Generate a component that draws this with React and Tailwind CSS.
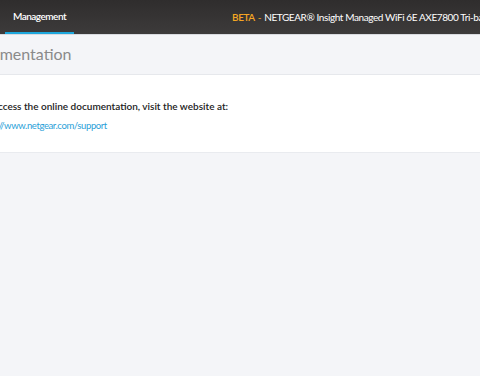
export default function App() {
  return (
    <div className="min-h-[376px] w-[480px] overflow-hidden bg-[#f4f5f8]" style={{ fontFamily: 'Lato, "Noto Sans", sans-serif' }}>
      <header className="flex h-[35px] items-stretch bg-gradient-to-b from-[#2f2d2d] to-[#3d3b3b] border-b border-[#d9dbe0]">
        <nav className="ml-[5px] flex">
          <div className="flex w-[69px] items-center justify-center border-b-[2px] border-[#1ea7dc] pt-[1px] text-[10px] font-semibold tracking-[-0.5px] text-white">
            Management
          </div>
        </nav>
        <div className="ml-auto flex min-w-0 items-center pl-[158px] whitespace-nowrap text-[10px] tracking-[-0.4px] text-white">
          <span className="font-semibold text-[#f5a623]">BETA</span>
          <span className="ml-[3px] text-[#f5a623]">-</span>
          <span className="ml-[3px]">NETGEAR® Insight Managed WiFi 6E AXE7800 Tri-band Multi-Gig Access Point</span>
        </div>
      </header>

      <div className="flex h-[40px] items-center border-b border-[#e6e8ec] pb-[1px]">
        <h1 className="ml-[-38px] text-[16px] text-[#8a8a8a]">Documentation</h1>
      </div>

      <section className="h-[78px] border-b border-[#e9ebef] bg-white pt-[24px]">
        <p className="ml-[-20px] text-[10px] font-semibold text-[#222]">
          To access the online documentation, visit the website at:
        </p>
        <a href="#" className="ml-[-23px] mt-[5px] block text-[9.5px] tracking-[-0.4px] text-[#2a9fd8]">
          https://www.netgear.com/support
        </a>
      </section>
    </div>
  );
}
